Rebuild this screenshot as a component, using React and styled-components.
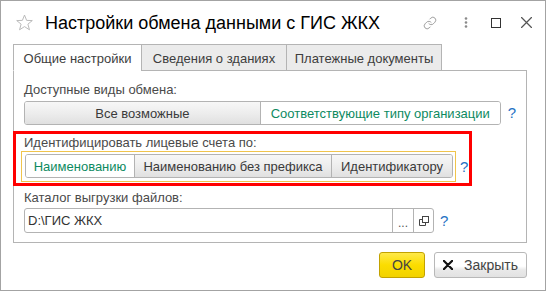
import React from 'react';
import styled, { createGlobalStyle } from 'styled-components';

const GlobalStyle = createGlobalStyle`
  body {
    margin: 0;
    padding: 0;
    background: #ffffff;
    font-family: 'Liberation Sans', Arial, sans-serif;
    font-size: 13px;
    color: #4a4a4a;
  }
`;

const Window = styled.div`
  width: 546px;
  height: 291px;
  box-sizing: border-box;
  border: 1px solid #a3a3a3;
  background: #ffffff;
  display: flex;
  flex-direction: column;
`;

const TitleBar = styled.div`
  height: 43px;
  display: flex;
  align-items: center;
  padding-left: 15px;
`;

const Title = styled.div`
  margin-left: 12px;
  font-size: 18px;
  line-height: 20px;
  color: #000000;
  white-space: nowrap;
`;

const TitleTools = styled.div`
  margin-left: auto;
  padding-right: 4px;
  display: flex;
  align-items: center;
`;

const ToolIcon = styled.div`
  width: 30px;
  height: 20px;
  display: flex;
  align-items: center;
  justify-content: center;
  margin-right: ${(p) => p.$gap || 0}px;
`;

const Body = styled.div`
  padding: 0 18px 0 12px;
  display: flex;
  flex-direction: column;
`;

const TabStrip = styled.div`
  display: flex;
  position: relative;
  z-index: 1;
  margin-bottom: -1px;
`;

const Tab = styled.div`
  width: ${(p) => p.$w}px;
  height: 27px;
  box-sizing: border-box;
  margin-left: ${(p) => (p.$first ? 0 : -1)}px;
  border: 1px solid #b4b4b4;
  border-bottom-color: ${(p) => (p.$active ? '#ffffff' : '#b4b4b4')};
  background: ${(p) => (p.$active ? '#ffffff' : '#ebebeb')};
  color: #3d3d3d;
  display: flex;
  align-items: center;
  justify-content: center;
  padding-top: 1px;
  line-height: 15px;
  white-space: nowrap;
`;

const Panel = styled.div`
  border: 1px solid #b4b4b4;
  padding: 11px 10px 9px 10px;
  display: flex;
  flex-direction: column;
`;

const Label = styled.div`
  line-height: 15px;
  color: #4a4a4a;
  margin-top: ${(p) => p.$mt || 0}px;
  margin-left: ${(p) => p.$ml || 0}px;
  margin-bottom: ${(p) => p.$mb || 0}px;
`;

const Row = styled.div`
  display: flex;
  align-items: center;
  margin-top: ${(p) => p.$mt || 0}px;
`;

const Segmented = styled.div`
  display: flex;
  height: 24px;
  box-sizing: border-box;
  border: 1px solid #b3b3b3;
  border-radius: 3px;
  overflow: hidden;
`;

const Segment = styled.div`
  width: ${(p) => p.$w}px;
  box-sizing: border-box;
  border-left: ${(p) => (p.$first ? 'none' : '1px solid #b3b3b3')};
  display: flex;
  align-items: center;
  justify-content: center;
  white-space: nowrap;
  line-height: 15px;
  color: ${(p) => (p.$selected ? '#0d8a5f' : '#3a3a3a')};
  background: ${(p) =>
    p.$selected
      ? '#ffffff'
      : 'linear-gradient(#f7f7f7 0%, #ececec 55%, #e0e0e0 100%)'};
`;

const Help = styled.span`
  margin-left: ${(p) => p.$ml}px;
  font-size: 15px;
  line-height: 16px;
  color: #2472c4;
`;

const Highlight = styled.div`
  width: 459px;
  box-sizing: border-box;
  margin: 6px 0 0 -11px;
  border: 3px solid #ff0000;
  padding: 1px 0 1px 5px;
  display: flex;
  flex-direction: column;
`;

const FocusFrame = styled.div`
  border: 1px solid #f0c44c;
  padding: 2px 2px 3px 3px;
  display: flex;
`;

const Field = styled.div`
  width: 410px;
  height: 25px;
  box-sizing: border-box;
  border: 1px solid #b3b3b3;
  border-radius: 3px;
  display: flex;
  overflow: hidden;
`;

const FieldText = styled.div`
  flex: 1;
  display: flex;
  align-items: center;
  padding-left: 3px;
  color: #333333;
  line-height: 15px;
`;

const FieldButton = styled.div`
  width: ${(p) => p.$w}px;
  box-sizing: border-box;
  border-left: 1px solid #b3b3b3;
  display: flex;
  align-items: center;
  justify-content: center;
  color: #555555;
  font-size: 12px;
  padding-top: ${(p) => p.$pt || 0}px;
`;

const Footer = styled.div`
  display: flex;
  justify-content: flex-end;
  gap: 9px;
  margin-top: 9px;
`;

const DialogButton = styled.div`
  width: ${(p) => p.$w}px;
  height: 26px;
  box-sizing: border-box;
  border-radius: 3px;
  border: 1px solid ${(p) => (p.$primary ? '#c2a200' : '#b8b8b8')};
  background: ${(p) =>
    p.$primary
      ? 'linear-gradient(#ffe94a 0%, #fbdd00 50%, #f2d200 100%)'
      : 'linear-gradient(#ffffff 0%, #ffffff 55%, #e9e9e9 70%, #e2e2e2 100%)'};
  display: flex;
  align-items: center;
  justify-content: center;
  gap: 11px;
  font-size: 14px;
  color: #444444;
  line-height: 16px;
`;

const StarIcon = () => (
  <svg width="17" height="17" viewBox="0 0 24 24">
    <polygon
      points="12,1.5 15,9 23,9.3 16.8,14.3 19,22.3 12,17.8 5,22.3 7.2,14.3 1,9.3 9,9"
      fill="none"
      stroke="#b5b5b5"
      strokeWidth="1.3"
      strokeLinejoin="round"
    />
  </svg>
);

const LinkIcon = () => (
  <svg width="14" height="14" viewBox="0 0 24 24" fill="none" stroke="#9a9a9a" strokeWidth="1.6" strokeLinecap="round">
    <path d="M10 13a5 5 0 0 0 7.54.54l3-3a5 5 0 0 0-7.07-7.07l-1.72 1.71" />
    <path d="M14 11a5 5 0 0 0-7.54-.54l-3 3a5 5 0 0 0 7.07 7.07l1.71-1.71" />
  </svg>
);

const DotsIcon = () => (
  <svg width="4" height="11" viewBox="0 0 4 11">
    <circle cx="2" cy="1.5" r="1.3" fill="#8a8a8a" />
    <circle cx="2" cy="5.5" r="1.3" fill="#8a8a8a" />
    <circle cx="2" cy="9.5" r="1.3" fill="#8a8a8a" />
  </svg>
);

const SquareIcon = () => (
  <svg width="10" height="10" viewBox="0 0 10 10">
    <rect x="0.5" y="0.5" width="9" height="9" fill="none" stroke="#333" strokeWidth="1" />
  </svg>
);

const CloseIcon = ({ size = 11, color = '#555', width = 1.1 }) => (
  <svg width={size} height={size} viewBox="0 0 10 10">
    <path d="M0.5 0.5 L9.5 9.5 M9.5 0.5 L0.5 9.5" stroke={color} strokeWidth={width} strokeLinecap="round" />
  </svg>
);

const OpenIcon = () => (
  <svg width="10" height="10" viewBox="0 0 10 10" fill="none" stroke="#444" strokeWidth="1">
    <rect x="3.5" y="0.5" width="6" height="6" />
    <path d="M3.5 3.5 H0.5 V9.5 H6.5 V6.5" />
  </svg>
);

function App() {
  return (
    <>
      <GlobalStyle />
      <Window>
        <TitleBar>
          <StarIcon />
          <Title>Настройки обмена данными с ГИС ЖКХ</Title>
          <TitleTools>
            <ToolIcon $gap={6}><LinkIcon /></ToolIcon>
            <ToolIcon><DotsIcon /></ToolIcon>
            <ToolIcon><SquareIcon /></ToolIcon>
            <ToolIcon><CloseIcon /></ToolIcon>
          </TitleTools>
        </TitleBar>
        <Body>
          <TabStrip>
            <Tab $first $active $w={129}>Общие настройки</Tab>
            <Tab $w={146}>Сведения о зданиях</Tab>
            <Tab $w={156}>Платежные документы</Tab>
          </TabStrip>
          <Panel>
            <Label>Доступные виды обмена:</Label>
            <Row $mt={4}>
              <Segmented>
                <Segment $first $w={235}>Все возможные</Segment>
                <Segment $selected $w={240}>Соответствующие типу организации</Segment>
              </Segmented>
              <Help $ml={7}>?</Help>
            </Row>
            <Highlight>
              <Label $ml={3} $mb={1}>Идентифицировать лицевые счета по:</Label>
              <Row>
                <FocusFrame>
                  <Segmented>
                    <Segment $first $selected $w={108}>Наименованию</Segment>
                    <Segment $w={197}>Наименованию без префикса</Segment>
                    <Segment $w={121}>Идентификатору</Segment>
                  </Segmented>
                </FocusFrame>
                <Help $ml={4}>?</Help>
              </Row>
            </Highlight>
            <Label $mt={4}>Каталог выгрузки файлов:</Label>
            <Row $mt={3}>
              <Field>
                <FieldText>D:\ГИС ЖКХ</FieldText>
                <FieldButton $w={21} $pt={4}>...</FieldButton>
                <FieldButton $w={20}><OpenIcon /></FieldButton>
              </Field>
              <Help $ml={6}>?</Help>
            </Row>
          </Panel>
          <Footer>
            <DialogButton $primary $w={46}>OK</DialogButton>
            <DialogButton $w={93}>
              <CloseIcon size={10} color="#111" width={2.2} />
              <span>Закрыть</span>
            </DialogButton>
          </Footer>
        </Body>
      </Window>
    </>
  );
}

export default App;
